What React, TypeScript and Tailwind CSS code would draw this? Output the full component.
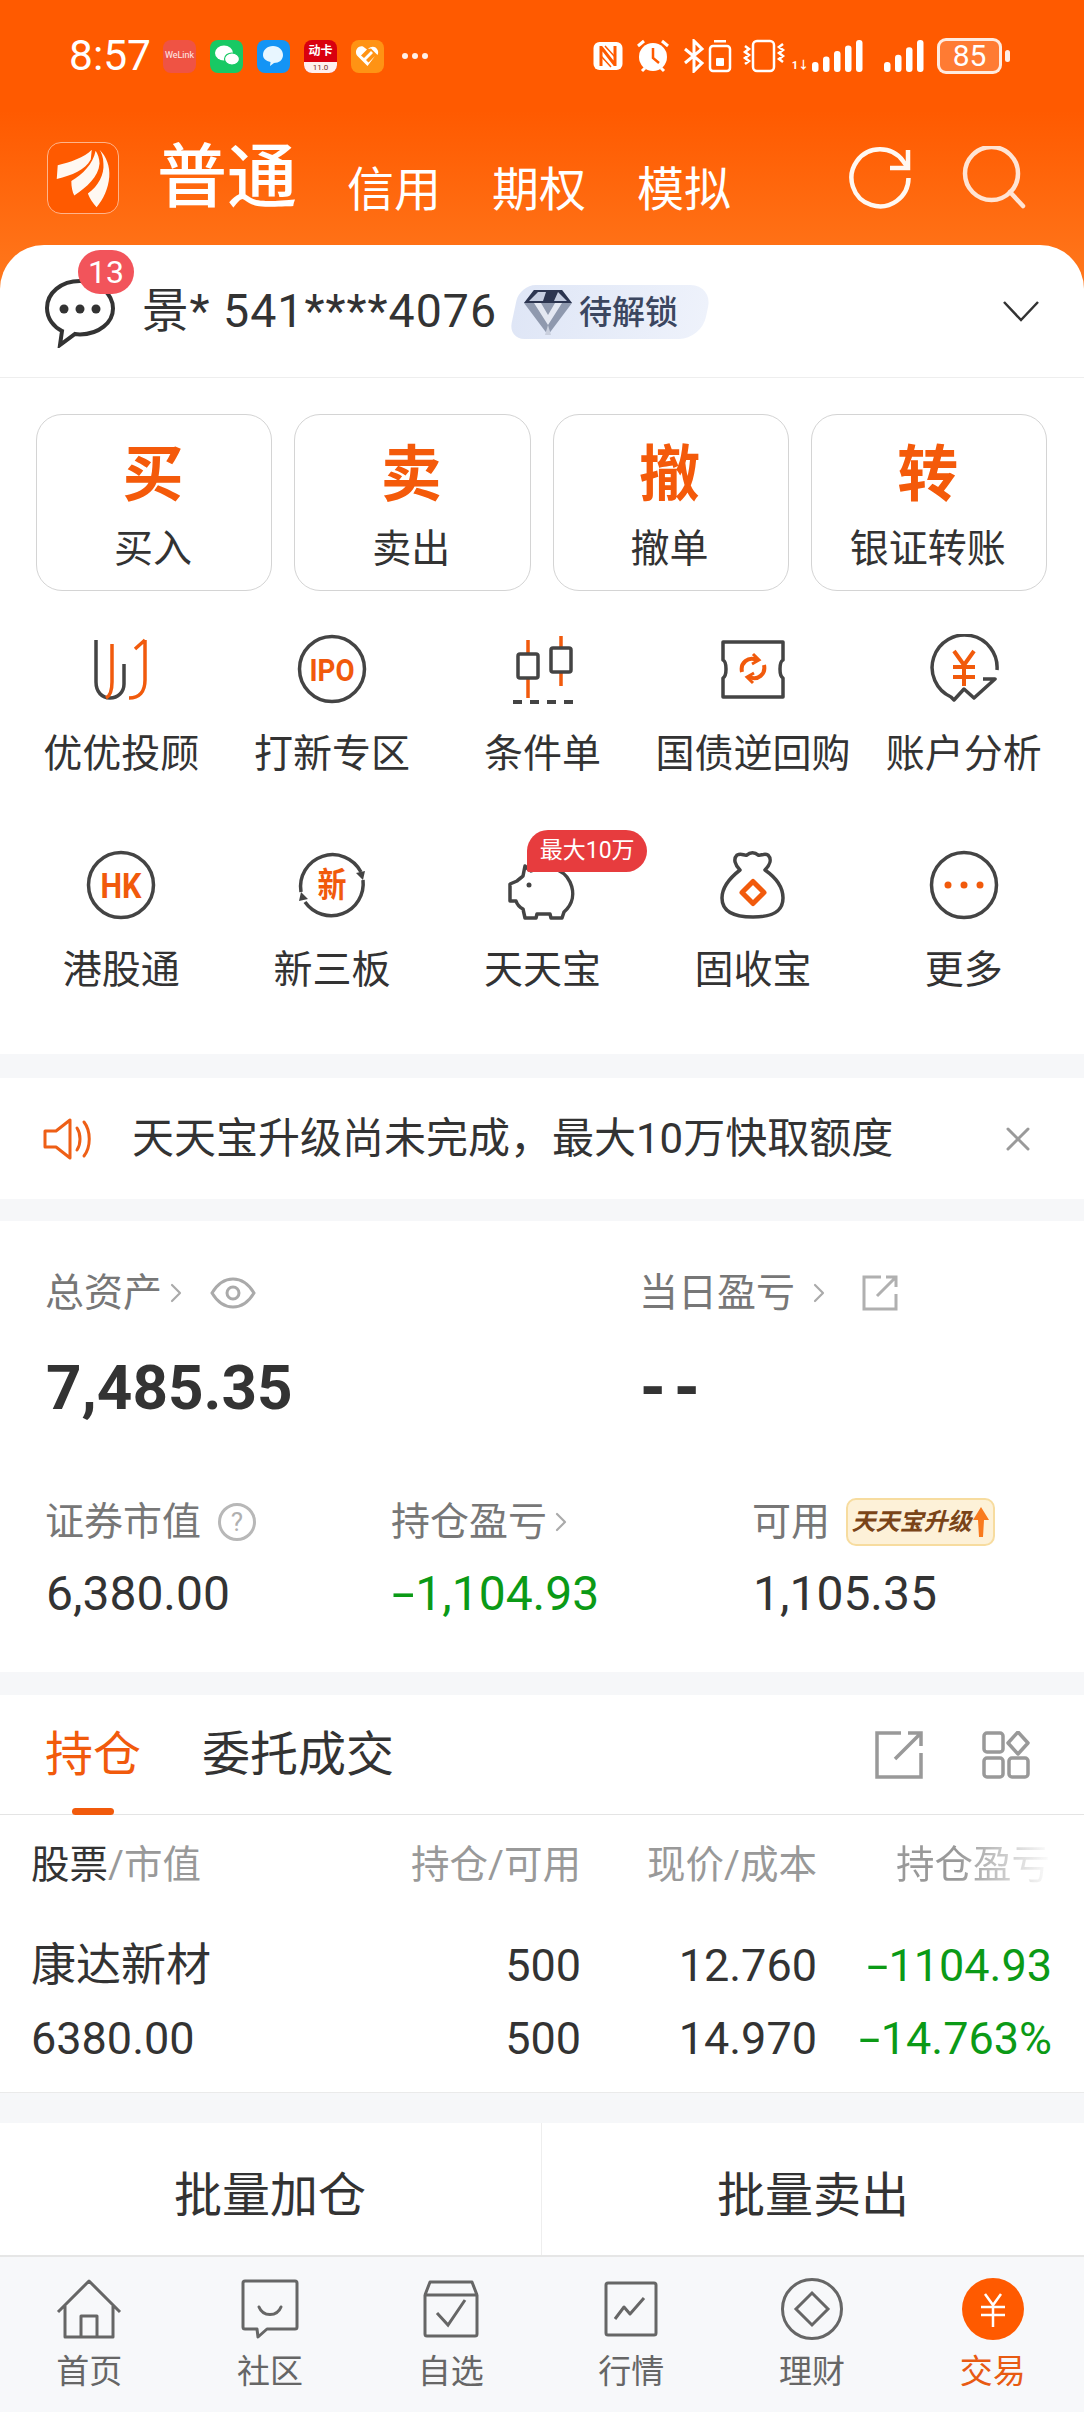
import { ReactNode } from 'react';
import { ChevronRight, X } from 'lucide-react';

const ORANGE = '#f15a0c';
const DARK = '#444444';

function Signal({ bars, width }: { bars: number; width: number }) {
  const step = 11;
  return (
    <svg width={width} height="34" viewBox={`0 0 ${width} 34`} fill="#fff">
      {Array.from({ length: bars }).map((_, i) => {
        const h = 10 + i * (22 / (bars - 1));
        return <rect key={i} x={width - (bars - i) * step + 3} y={33 - h} width="6.500" height={h} rx="3" />;
      })}
    </svg>
  );
}

function StatusBar() {
  return (
    <div className="h-[112px] flex items-center pl-[69px] pr-[74px] text-white">
      <span className="text-[42.500px] leading-none w-[94px] font-normal">8:57</span>
      <div className="flex items-center gap-[14px]">
        <div className="w-[33px] h-[33px] rounded-[8px] bg-[#ef5344] flex items-center justify-center text-[9px] text-white/90 overflow-hidden">WeLink</div>
        <div className="w-[33px] h-[33px] rounded-[8px] bg-[#18c964] flex items-center justify-center">
          <svg width="26" height="24" viewBox="0 0 26 24" fill="#fff">
            <ellipse cx="10" cy="9" rx="9" ry="7.500" />
            <ellipse cx="18" cy="15" rx="7.500" ry="6" stroke="#18c964" strokeWidth="1.200" />
          </svg>
        </div>
        <div className="w-[33px] h-[33px] rounded-[8px] bg-[#1494f5] flex items-center justify-center">
          <svg width="25" height="24" viewBox="0 0 25 24">
            <path d="M12 2c6 0 10 4 10 9s-4 8-9 8l-4 3 .5-4C5 17 2 14.500 2 11c0-5 4-9 10-9z" fill="#e8f6ff" />
          </svg>
        </div>
        <div className="w-[33px] h-[33px] rounded-[8px] bg-[#d9000f] flex flex-col items-center overflow-hidden">
          <span className="text-[12px] leading-[22px] font-bold text-white">动卡</span>
          <span className="w-full flex-1 bg-[#fff0ee] text-[8px] leading-[11px] text-center text-[#7a2a20]">11.0</span>
        </div>
        <div className="w-[33px] h-[33px] rounded-[8px] bg-[#ff9314] flex items-center justify-center">
          <svg width="25" height="22" viewBox="0 0 25 22" fill="#fff">
            <path d="M12.500 21 2 10.500C-1 6 3 0 8 1.500l4 3-6 6 3 2.500 7-7 2 2-7 7 2.500 2.500 5-5 1.500-1.500L12.500 21z" />
            <path d="M13 4c3-3 7-3 9 0 1.500 2 1.500 4 .5 6L16 3.500z" />
          </svg>
        </div>
      </div>
      <div className="flex gap-[4px] ml-[18px]">
        <i className="w-[6px] h-[6px] rounded-full bg-white/90" />
        <i className="w-[6px] h-[6px] rounded-full bg-white/90" />
        <i className="w-[6px] h-[6px] rounded-full bg-white/90" />
      </div>
      <div className="flex items-center ml-auto">
        <svg width="32" height="32" viewBox="0 0 32 32" fill="none" stroke="#fff">
          <rect x="1.500" y="2" width="29" height="28" rx="6" fill="#fff" stroke="none" />
          <path d="M9 6v20M23 6v20M9 7l14 18" stroke="#ff5a00" strokeWidth="3" />
          <path d="M9 16l10 11M13 6l10 11" stroke="#ff5a00" strokeWidth="1.500" />
        </svg>
        <svg className="ml-[11px]" width="36" height="36" viewBox="0 0 36 36" fill="none">
          <circle cx="18" cy="19" r="14" fill="#fff" />
          <path d="M18 10v10l6 5" stroke="#ff5a00" strokeWidth="2.500" />
          <path d="M3 8l6-5M33 8l-6-5M7 33l3-3M29 33l-3-3" stroke="#fff" strokeWidth="3" />
        </svg>
        <svg className="ml-[12px]" width="22" height="34" viewBox="0 0 22 34" fill="none" stroke="#fff" strokeWidth="3">
          <path d="M2 10l17 14-8 8V2l8 8L2 24" />
        </svg>
        <svg className="ml-[3px]" width="24" height="34" viewBox="0 0 24 34" fill="none">
          <rect x="2" y="7" width="20" height="25" rx="3" stroke="#fff" strokeWidth="2.500" />
          <rect x="6" y="1" width="12" height="2.500" fill="#fff" />
          <rect x="8" y="19" width="8" height="8" rx="1" fill="#fff" />
        </svg>
        <svg className="ml-[10px]" width="44" height="34" viewBox="0 0 44 34" fill="none" stroke="#fff" strokeWidth="2.500">
          <rect x="11" y="2" width="21" height="30" rx="4" />
          <path d="M3 7l4 3-4 3 4 3-4 3 4 3-4 3M41 5l-4 3 4 3-4 3 4 3-4 3 4 3" />
        </svg>
        <div className="ml-[6px] flex items-end">
          <span className="text-[11px] leading-[14px] font-bold mr-[1px]">1↓</span>
          <Signal bars={5} width={54} />
        </div>
        <div className="ml-[17px]"><Signal bars={4} width={44} /></div>
        <div className="ml-[12px] w-[65px] h-[36px] rounded-[9px] border-[3px] border-white/85 bg-white/20 flex items-center justify-center text-[30px] leading-none">85</div>
        <i className="ml-[3px] w-[5px] h-[12px] rounded-full bg-white/90" />
      </div>
    </div>
  );
}

function TopBar() {
  return (
    <div className="h-[133px] flex pl-[47px] pr-[57px] text-white">
      <div className="mt-[30px] w-[72px] h-[72px] rounded-[14px] bg-[#ff5a00] border border-[#ffb48a]">
        <svg width="70" height="70" viewBox="0 0 72 72" fill="#fff8f2">
          <path d="M45 7C38 15 22 20 10 23L9 37C25 33 38 28 44 17Z" />
          <path d="M49 8C46 22 36 32 24 39C24 45 25 50 27 54C40 45 52 35 53 21C53 16 51 11 49 8Z" />
          <path d="M53 7C60 14 64 24 63 35C62 47 57 58 50 66C46 62 43 57 41 52C52 44 58 32 57 21C57 15 55 10 53 7Z" />
        </svg>
      </div>
      <span className="ml-[38px] mt-[24px] text-[70px] leading-[84px] font-medium">普通</span>
      <div className="ml-[50px] mt-[43px] flex gap-[51px] text-[47px] leading-[70px]">
        <span>信用</span>
        <span>期权</span>
        <span>模拟</span>
      </div>
      <svg className="ml-auto mt-[34px]" width="66" height="66" viewBox="0 0 66 66" fill="none" stroke="#fff8f2" strokeWidth="4.500">
        <path d="M61.500 32A28.500 28.500 0 1 1 56 15L61 22" />
        <path d="M61 4v18H43" />
      </svg>
      <svg className="ml-[48px] mt-[34px]" width="66" height="66" viewBox="0 0 66 66" fill="none" stroke="#ffe4d4" strokeWidth="4.500" strokeLinecap="round">
        <circle cx="30.500" cy="27.500" r="26.500" />
        <path d="M49 46l13 14" />
      </svg>
    </div>
  );
}

function AccountRow() {
  return (
    <div className="h-[133px] flex items-center pl-[45px] pr-[44px] border-b border-[#eeeeee] relative">
      <svg width="70" height="70" viewBox="0 0 70 70" fill="none" className="mt-[4px]">
        <path d="M35 3C16 3 2 15 2 30c0 11 7 19 15 23l-2 14 15-11c2 .4 3 .4 5 .4 19 0 33-12 33-26S54 3 35 3z" stroke="#333" strokeWidth="4" />
        <circle cx="19" cy="31" r="4.500" fill="#333" />
        <circle cx="35" cy="31" r="4.500" fill="#333" />
        <circle cx="51" cy="31" r="4.500" fill="#333" />
      </svg>
      <span className="absolute left-[78px] top-[5px] w-[56px] h-[44px] rounded-full bg-[#f2545b] text-white text-[32px] leading-[44px] text-center">13</span>
      <span className="ml-[27px] text-[46.500px] leading-none tracking-[1px] text-[#333]">景* 541****4076</span>
      <div className="ml-[17px] w-[193px] h-[54px] rounded-l-[16px] rounded-r-[22px] bg-gradient-to-r from-[#dfe6f6] to-[#eef2fb] skew-x-[-12deg] mb-[-2px]">
        <div className="skew-x-[12deg] flex items-center h-full pl-[10px]">
          <svg width="48" height="48" viewBox="0 0 48 48">
            <path d="M10 2h28l10 13-24 32L0 15z" fill="#8f99ae" />
            <path d="M10 2h28l10 13H0z" fill="#2c3550" />
            <path d="M14 4h8l-3 9H5zM34 4l9 9H30z" fill="#c5cde0" />
            <path d="M10 15l14 22 14-22-7 0-7 12-7-12z" fill="#e4e8f2" />
            <path d="M24 37l3 10h-6z" fill="#c9cfdd" />
          </svg>
          <span className="ml-[7px] text-[33px] leading-none text-[#3b4660] font-medium">待解锁</span>
        </div>
      </div>
      <svg className="ml-auto" width="38" height="22" viewBox="0 0 38 22" fill="none" stroke="#333" strokeWidth="2.500">
        <path d="M2 2l17 18L36 2" />
      </svg>
    </div>
  );
}

function QuickActions() {
  const items = [
    { big: '买', label: '买入' },
    { big: '卖', label: '卖出' },
    { big: '撤', label: '撤单' },
    { big: '转', label: '银证转账' },
  ];
  return (
    <div className="grid grid-cols-4 gap-[22px] pl-[36px] pr-[37px] pt-[36px]">
      {items.map((it) => (
        <div key={it.big} className="h-[177px] rounded-[26px] border border-[#d4d4d4] flex flex-col items-center pt-[25px]">
          <span className="text-[61px] leading-[70px] font-bold text-[#f45a0a] mr-[2px]">{it.big}</span>
          <span className="mt-[17px] text-[39px] leading-[44px] text-[#333] mr-[2px]">{it.label}</span>
        </div>
      ))}
    </div>
  );
}

const IconU = () => (
  <svg width="70" height="70" viewBox="0 0 70 70" fill="none" strokeWidth="3.500">
    <path d="M10 6v42c0 10 6 16 14 16 8 0 14-6 14-14V30" stroke={DARK} />
    <path d="M26 10v38c0 8-2 14-6 16" stroke={ORANGE} />
    <path d="M59 6v40c0 12-6 18-16 18M49 15l10-9" stroke={ORANGE} />
  </svg>
);

const IconCircleText = ({ text, size, span }: { text: string; size: number; span: number }) => (
  <svg width="70" height="70" viewBox="0 0 70 70" fill="none">
    <circle cx="35" cy="35" r="32.500" stroke={DARK} strokeWidth="3.500" />
    <text x="35" y={35 + size * 0.36} textAnchor="middle" fontSize={size} fontWeight="700" fill={ORANGE} textLength={span} lengthAdjust="spacingAndGlyphs" fontFamily="Roboto, 'Noto Sans CJK SC', sans-serif">{text}</text>
  </svg>
);

const IconCandle = () => (
  <svg width="70" height="70" viewBox="0 0 70 70" fill="none" strokeWidth="3.500">
    <path d="M21 6v58M54 2v50" stroke={ORANGE} />
    <rect x="11" y="20" width="20" height="24" rx="2" fill="#fff" stroke={DARK} />
    <rect x="44" y="14" width="20" height="24" rx="2" fill="#fff" stroke={DARK} />
    <path d="M6 68h60" stroke={DARK} strokeWidth="4" strokeDasharray="9 8" />
  </svg>
);

const IconTicket = () => (
  <svg width="70" height="70" viewBox="0 0 70 70" fill="none" strokeWidth="3.500">
    <path d="M5 8h60v18c-4 2-4 16 0 18v19H5V44c4-2 4-16 0-18z" stroke={DARK} strokeLinejoin="round" />
    <path d="M24 38c-2-9 6-16 15-12M46 31c2 9-6 16-15 12" stroke={ORANGE} strokeWidth="4" />
    <path d="M35 20l6 6-7 4M35 49l-6-6 7-4" stroke={ORANGE} strokeWidth="3" />
  </svg>
);

const IconAnalysis = () => (
  <svg width="70" height="70" viewBox="0 0 70 70" fill="none" strokeWidth="3.500">
    <path d="M68 36A32.500 32.500 0 1 0 22 63l3 3 10-11 10 9 21-19H54" stroke={DARK} strokeLinejoin="round" />
    <path d="M25 17l10 14 10-14M24 33h22M24 43h22M35 31v21" stroke={ORANGE} strokeWidth="4" />
  </svg>
);

const IconNewBoard = () => (
  <svg width="70" height="70" viewBox="0 0 70 70" fill="none">
    <path d="M4 42A32 32 0 0 1 64 22M66 30A32 32 0 0 1 8 52" stroke={DARK} strokeWidth="3.500" />
    <path d="M66 30l-7-7 9-2zM4 42l7 7-9 2z" fill={DARK} />
    <text x="35" y="47" textAnchor="middle" fontSize="34" fontWeight="700" fill={ORANGE} textLength="29" lengthAdjust="spacingAndGlyphs" fontFamily="'Noto Sans CJK SC', sans-serif">新</text>
  </svg>
);

const IconPig = () => (
  <svg width="70" height="60" viewBox="0 0 70 60" fill="none" stroke={DARK} strokeWidth="3.500" strokeLinejoin="round">
    <path d="M18 6c2 2 4 4 6 5 14-6 32-4 39 11 5 11 3 22-6 30l-2 6H44l-1-4H30l-1 4H18l-2-9c-4-2-6-5-7-8H3V24l7-3c2-2 4-3 6-5z" />
    <circle cx="22" cy="25" r="2.500" fill={DARK} stroke="none" />
  </svg>
);

const IconBag = () => (
  <svg width="66" height="70" viewBox="0 0 66 70" fill="none">
    <path d="M20 20C15 15 13 9 17 5C22 3 24 6 27 5C30 2 35 2 38 5C41 6 44 3 48 5C52 9 50 15 45 20C55 27 63 36 63 48C63 62 52 67 33 67C14 67 2 62 2 48C2 36 11 27 20 20Z" stroke={DARK} strokeWidth="3.500" strokeLinejoin="round" />
    <path d="M33 31.500L44 42.500L33 53.500L22 42.500Z" stroke={ORANGE} strokeWidth="5" strokeLinejoin="round" />
  </svg>
);

const IconMore = () => (
  <svg width="70" height="70" viewBox="0 0 70 70" fill="none">
    <circle cx="35" cy="35" r="32.500" stroke={DARK} strokeWidth="3.500" />
    <circle cx="19" cy="35" r="3.500" fill={ORANGE} />
    <circle cx="35" cy="35" r="3.500" fill={ORANGE} />
    <circle cx="51" cy="35" r="3.500" fill={ORANGE} />
  </svg>
);

function ToolItem({ icon, label, badge }: { icon: ReactNode; label: string; badge?: string }) {
  return (
    <div className="relative flex flex-col items-center">
      <div className="h-[70px] flex items-end justify-center">{icon}</div>
      <span className="mt-[26px] text-[39px] leading-[48px] text-[#333] whitespace-nowrap">{label}</span>
      {badge && (
        <span className="absolute left-[90px] top-[-20px] w-[120px] h-[42px] rounded-tl-[21px] rounded-tr-[21px] rounded-br-[21px] rounded-bl-[2px] bg-[#e73c3e] text-white text-[23px] leading-[42px] text-center">
          {badge}
        </span>
      )}
    </div>
  );
}

function ToolGrid() {
  return (
    <div className="grid grid-cols-5 gap-y-[72px] pl-[16px] pr-[15px] pt-[43px] pb-[60px]">
      <ToolItem icon={<IconU />} label="优优投顾" />
      <ToolItem icon={<IconCircleText text="IPO" size={32} span={45} />} label="打新专区" />
      <ToolItem icon={<IconCandle />} label="条件单" />
      <ToolItem icon={<IconTicket />} label="国债逆回购" />
      <ToolItem icon={<IconAnalysis />} label="账户分析" />
      <ToolItem icon={<IconCircleText text="HK" size={35} span={41} />} label="港股通" />
      <ToolItem icon={<IconNewBoard />} label="新三板" />
      <ToolItem icon={<IconPig />} label="天天宝" badge="最大10万" />
      <ToolItem icon={<IconBag />} label="固收宝" />
      <ToolItem icon={<IconMore />} label="更多" />
    </div>
  );
}

function Notice() {
  return (
    <div className="h-[121px] bg-white flex items-center pl-[43px] pr-[46px]">
      <svg width="48" height="44" viewBox="0 0 48 44" fill="none" stroke="#ee5f16" strokeWidth="3">
        <path d="M2 14h11L27 3v38L13 30H2z" strokeLinejoin="round" />
        <path d="M34 11c4 6 4 16 0 22M41 5c7 9 7 25 0 34" strokeLinecap="round" />
      </svg>
      <span className="ml-[41px] text-[42px] leading-none text-[#333] whitespace-nowrap">天天宝升级尚未完成，最大10万快取额度</span>
      <X className="ml-auto text-[#9a9a9a]" size={40} strokeWidth={1.8} />
    </div>
  );
}

// the app's minus sign is wider than a plain hyphen
const Minus = ({ gap }: { gap: string }) => (
  <span className={`inline-block origin-left scale-x-[1.7] ${gap}`}>-</span>
);

function Assets() {
  return (
    <div className="h-[451px] bg-white pl-[46px] pt-[49px]">
      <div className="flex h-[46px] items-center text-[39px] text-[#777] ml-[-1px]">
        <div className="w-[594px] flex items-center">
          <span>总资产</span>
          <ChevronRight className="text-[#aaa] ml-[-2px]" size={32} strokeWidth={1.6} />
          <svg className="ml-[18px]" width="46" height="32" viewBox="0 0 46 32" fill="none" stroke="#aaa" strokeWidth="3">
            <path d="M2 16C8 6 15 2 23 2s15 4 21 14c-6 10-13 14-21 14S8 26 2 16z" />
            <circle cx="23" cy="16" r="6" />
          </svg>
        </div>
        <span>当日盈亏</span>
        <ChevronRight className="text-[#aaa] ml-[8px]" size={32} strokeWidth={1.6} />
        <svg className="ml-[26px]" width="38" height="38" viewBox="0 0 38 38" fill="none" stroke="#b0b0b0" strokeWidth="3">
          <path d="M20 3H3v32h32V20M16 22L35 3M25 3h10v10" />
        </svg>
      </div>
      <div className="flex h-[80px] mt-[32px] items-center text-[#333]">
        <span className="w-[593px] text-[62px] leading-none font-bold">7,485.35</span>
        <span className="text-[62px] leading-none font-black tracking-[6px]">--</span>
      </div>
      <div className="flex mt-[69px] h-[50px] items-center text-[39px] text-[#777] ml-[-1px]">
        <div className="w-[346px] flex items-center">
          <span>证券市值</span>
          <span className="ml-[17px] w-[38px] h-[38px] rounded-full border-[3px] border-[#b8b8b8] text-[#b0b0b0] text-[26px] leading-[32px] text-center">?</span>
        </div>
        <div className="w-[361px] flex items-center">
          <span>持仓盈亏</span>
          <ChevronRight className="text-[#aaa] ml-[-2px]" size={32} strokeWidth={1.6} />
        </div>
        <span>可用</span>
        <div className="ml-[16px] w-[149px] h-[48px] rounded-[10px] border-[2px] border-[#f7dc9f] bg-[#fdf1d8] flex items-center justify-center text-[#7a4418] text-[24px] font-bold italic leading-none">
          天天宝升级
          <svg width="18" height="32" viewBox="0 0 18 32" fill="#f97a1e"><path d="M9 1l8 13h-5l-1 17H7L6 14H1z" /></svg>
        </div>
      </div>
      <div className="flex mt-[19px] h-[56px] items-center text-[48px] leading-none text-[#333]">
        <span className="w-[346px]">6,380.00</span>
        <span className="w-[361px] text-[#0b9a16]"><Minus gap="mr-[10px]" />1,104.93</span>
        <span>1,105.35</span>
      </div>
    </div>
  );
}

const TABLE_COLS = 'grid grid-cols-[310px_240px_236px_235px] items-center';

function Holdings() {
  return (
    <div className="bg-white">
      <div className="h-[120px] relative flex items-center pl-[45px] pr-[54px] border-b border-[#e4e4e4]">
        <span className="text-[48px] leading-none text-[#f15a0c]">持仓</span>
        <span className="ml-[61px] text-[48px] leading-none text-[#333]">委托成交</span>
        <i className="absolute left-[72px] bottom-[-1px] w-[42px] h-[7px] rounded-full bg-[#f15a0c]" />
        <svg className="ml-auto" width="48" height="48" viewBox="0 0 48 48" fill="none" stroke="#999" strokeWidth="3.500">
          <path d="M26 2H2v44h44V22M20 28L46 2M33 2h13v13" />
        </svg>
        <svg className="ml-[59px]" width="48" height="48" viewBox="0 0 48 48" fill="none" stroke="#999" strokeWidth="3.500">
          <rect x="2" y="2" width="19" height="19" rx="3" />
          <rect x="2" y="27" width="19" height="19" rx="3" />
          <rect x="27" y="27" width="19" height="19" rx="3" />
          <path d="M36 1l10 11-10 11-10-11z" strokeLinejoin="round" />
        </svg>
      </div>
      <div className="pl-[31px] pr-[32px] pb-[17px]">
        <div className={`${TABLE_COLS} h-[100px] text-[38.500px] text-[#999]`}>
          <span><span className="text-[#333]">股票</span>/市值</span>
          <span className="text-right">持仓/可用</span>
          <span className="text-right">现价/成本</span>
          <span className="text-right pr-[2px] text-transparent bg-clip-text bg-gradient-to-r from-[#999] from-[60%] to-white/0">持仓盈亏</span>
        </div>
        <div className={`${TABLE_COLS} h-[73px] mt-[14px] text-[45px] leading-none text-[#333]`}>
          <span>康达新材</span>
          <span className="text-right">500</span>
          <span className="text-right">12.760</span>
          <span className="text-right text-[#0b9a16]"><Minus gap="mr-[9px]" />1104.93</span>
        </div>
        <div className={`${TABLE_COLS} h-[73px] text-[45px] leading-none text-[#333]`}>
          <span>6380.00</span>
          <span className="text-right">500</span>
          <span className="text-right">14.970</span>
          <span className="text-right text-[#0b9a16]"><Minus gap="mr-[9px]" />14.763%</span>
        </div>
      </div>
    </div>
  );
}

function BatchButtons() {
  return (
    <div className="h-[132px] bg-white grid grid-cols-2 text-[48px] text-[#333]">
      <div className="flex items-center justify-center border-r border-[#eeeeee] pr-[1px] pt-[14px]">批量加仓</div>
      <div className="flex items-center justify-center pt-[14px]">批量卖出</div>
    </div>
  );
}

const NAV_STROKE = '#666666';

function TabBar() {
  const items: { label: string; icon: ReactNode; active?: boolean }[] = [
    {
      label: '首页',
      icon: (
        <svg width="66" height="60" viewBox="0 0 66 60" fill="none" stroke={NAV_STROKE} strokeWidth="3">
          <path d="M2 33L33 2l31 31M9 27v31h48V27M25 58V37h16v21" strokeLinejoin="round" />
        </svg>
      ),
    },
    {
      label: '社区',
      icon: (
        <svg width="58" height="60" viewBox="0 0 58 60" fill="none" stroke={NAV_STROKE} strokeWidth="3">
          <path d="M2 4a2 2 0 0 1 2-2h50a2 2 0 0 1 2 2v44a2 2 0 0 1-2 2H26l-9 8-1-8H4a2 2 0 0 1-2-2z" strokeLinejoin="round" />
          <path d="M18 28c4 10 18 10 22 0" strokeLinecap="round" />
        </svg>
      ),
    },
    {
      label: '自选',
      icon: (
        <svg width="56" height="58" viewBox="0 0 56 58" fill="none" stroke={NAV_STROKE} strokeWidth="3">
          <path d="M2 15l5-13h42l5 13M2 15h52v39a2 2 0 0 1-2 2H4a2 2 0 0 1-2-2z" strokeLinejoin="round" />
          <path d="M14 33l11 12 17-25" />
        </svg>
      ),
    },
    {
      label: '行情',
      icon: (
        <svg width="54" height="56" viewBox="0 0 54 56" fill="none" stroke={NAV_STROKE} strokeWidth="3">
          <rect x="2" y="2" width="50" height="52" rx="2" />
          <path d="M11 38l9-12 6 7 14-16" strokeLinejoin="round" />
        </svg>
      ),
    },
    {
      label: '理财',
      icon: (
        <svg width="62" height="62" viewBox="0 0 62 62" fill="none" stroke={NAV_STROKE} strokeWidth="3">
          <circle cx="31" cy="31" r="29.500" />
          <path d="M31 15l16 16-16 16-16-16z" />
        </svg>
      ),
    },
    {
      label: '交易',
      active: true,
      icon: (
        <svg width="62" height="62" viewBox="0 0 62 62" fill="none">
          <circle cx="31" cy="31" r="31" fill="#ff5a00" />
          <path d="M23 16l8 11 8-11M19 29h24M19 37h24M31 27v22" stroke="#fff" strokeWidth="2.500" />
        </svg>
      ),
    },
  ];
  return (
    <div className="flex-1 bg-[#f7f8fa] border-t-[2px] border-[#e6e6e6] grid grid-cols-6 pt-[20px]">
      {items.map((it) => (
        <div key={it.label} className="flex flex-col items-center mr-[2px]">
          <div className="h-[63px] flex items-center justify-center">{it.icon}</div>
          <span className={`mt-[13px] text-[33px] leading-[38px] ${it.active ? 'text-[#e85a12]' : 'text-[#666]'}`}>{it.label}</span>
        </div>
      ))}
    </div>
  );
}

export default function App() {
  return (
    <div className="w-[1084px] h-[2412px] overflow-hidden flex flex-col bg-[#f6f7f9] [font-family:Roboto,'Noto_Sans_CJK_SC',sans-serif]">
      <div className="bg-[linear-gradient(180deg,#ff5a00_0px,#ff5a00_110px,#ff7a1f_300px)]">
        <StatusBar />
        <TopBar />
        <div className="bg-white rounded-t-[44px]">
          <AccountRow />
        </div>
      </div>
      <div className="bg-white">
        <QuickActions />
        <ToolGrid />
      </div>
      <div className="h-[24px] shrink-0" />
      <Notice />
      <div className="h-[22px] shrink-0" />
      <Assets />
      <div className="h-[23px] shrink-0" />
      <Holdings />
      <div className="h-[31px] shrink-0 border-t border-[#eaeaea]" />
      <BatchButtons />
      <TabBar />
    </div>
  );
}
